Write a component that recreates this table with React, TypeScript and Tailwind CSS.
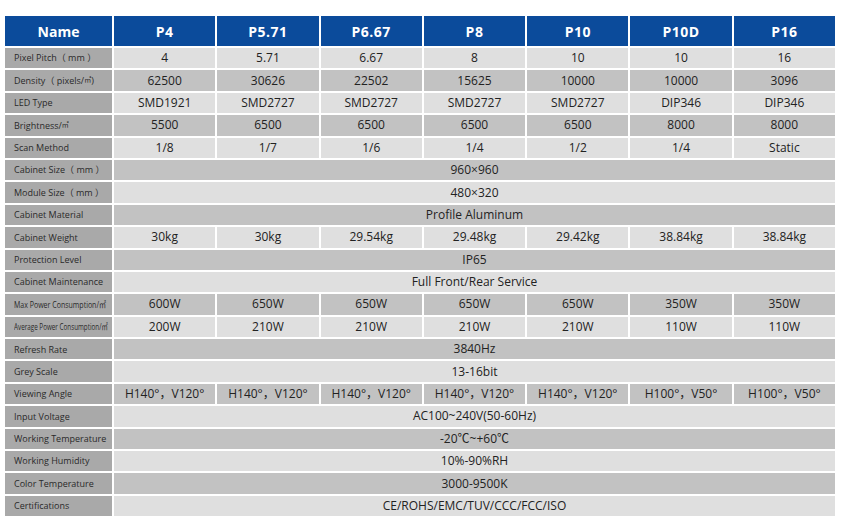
const heads = ["P4", "P5.71", "P6.67", "P8", "P10", "P10D", "P16"];

type Row = { label: React.ReactNode; values: string[] | string };

const rows: Row[] = [
  { label: "Pixel Pitch（ mm ）", values: ["4", "5.71", "6.67", "8", "10", "10", "16"] },
  { label: <>Density（ pixels/<span className="text-[7px]">㎡</span>)</>, values: ["62500", "30626", "22502", "15625", "10000", "10000", "3096"] },
  { label: "LED Type", values: ["SMD1921", "SMD2727", "SMD2727", "SMD2727", "SMD2727", "DIP346", "DIP346"] },
  { label: <>Brightness/<span className="text-[7px]">㎡</span></>, values: ["5500", "6500", "6500", "6500", "6500", "8000", "8000"] },
  { label: "Scan Method", values: ["1/8", "1/7", "1/6", "1/4", "1/2", "1/4", "Static"] },
  { label: "Cabinet Size（ mm ）", values: "960×960" },
  { label: "Module Size（ mm ）", values: "480×320" },
  { label: "Cabinet Material", values: "Profile Aluminum" },
  { label: "Cabinet Weight", values: ["30kg", "30kg", "29.54kg", "29.48kg", "29.42kg", "38.84kg", "38.84kg"] },
  { label: "Protection Level", values: "IP65" },
  { label: "Cabinet Maintenance", values: "Full Front/Rear Service" },
  {
    label: <span className="inline-block origin-left scale-x-[0.78] whitespace-nowrap">Max Power Consumption/㎡</span>,
    values: ["600W", "650W", "650W", "650W", "650W", "350W", "350W"],
  },
  {
    label: <span className="inline-block origin-left scale-x-[0.7] whitespace-nowrap">Average Power Consumption/㎡</span>,
    values: ["200W", "210W", "210W", "210W", "210W", "110W", "110W"],
  },
  { label: "Refresh Rate", values: "3840Hz" },
  { label: "Grey Scale", values: "13-16bit" },
  { label: "Viewing Angle", values: ["H140°，V120°", "H140°，V120°", "H140°，V120°", "H140°，V120°", "H140°，V120°", "H100°，V50°", "H100°，V50°"] },
  { label: "Input Voltage", values: "AC100~240V(50-60Hz)" },
  { label: "Working Temperature", values: "-20℃~+60℃" },
  { label: "Working Humidity", values: "10%-90%RH" },
  { label: "Color Temperature", values: "3000-9500K" },
  { label: "Certifications", values: "CE/ROHS/EMC/TUV/CCC/FCC/ISO" },
];

export default function App() {
  return (
    <div className="w-[845px] h-[525px] bg-white pt-[16px] pl-[5px] font-['Open_Sans','Noto_Sans_CJK_SC',sans-serif]">
      <div className="grid w-[830px] grid-cols-[107px_repeat(7,1fr)] grid-rows-[30px_repeat(21,20.4px)] gap-[2px]">
        <div className="flex items-center justify-center bg-[#0b4b9b] text-[14px] font-bold text-white">Name</div>
        {heads.map((h) => (
          <div key={h} className="flex items-center justify-center bg-[#0b4b9b] text-[14px] font-bold tracking-[0.5px] text-white">
            {h}
          </div>
        ))}
        {rows.map((r, i) => {
          const bg = i % 2 === 0 ? "bg-[#dfdfdf]" : "bg-[#c2c2c2]";
          return [
            <div key={"l" + i} className="flex items-center overflow-hidden whitespace-nowrap bg-[#a9a9a9] pl-[9px] text-[9px] text-[#2a2a2a]">
              {r.label}
            </div>,
            typeof r.values === "string" ? (
              <div key={"s" + i} className={`col-span-7 flex items-center justify-center ${bg} text-[12px] text-[#222]`}>
                {r.values}
              </div>
            ) : (
              r.values.map((v, j) => (
                <div key={i + "-" + j} className={`flex items-center justify-center ${bg} text-[12px] text-[#222]`}>
                  {v}
                </div>
              ))
            ),
          ];
        })}
      </div>
    </div>
  );
}
